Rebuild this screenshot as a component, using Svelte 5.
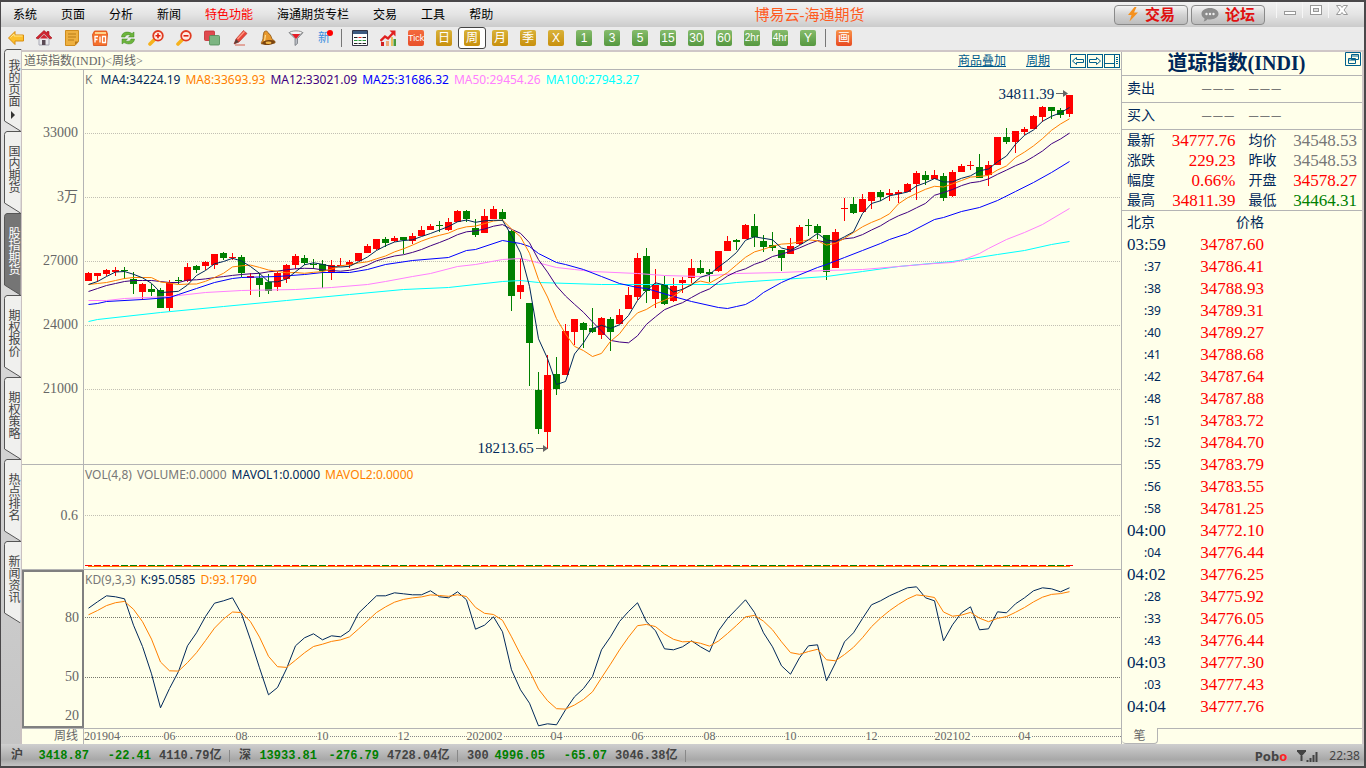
<script lang="ts">
  // Weekly chart workspace: menu, period toolbar, page tabs, K-line / volume / KD
  // panes, the quote panel with its tick list and the index ticker at the bottom.

  type Candle = [dir: string, top: number, bottom: number, high: number, low: number];

  const menu = ['系统', '页面', '分析', '新闻', '特色功能', '海通期货专栏', '交易', '工具', '帮助'];
  const tabs = ['我的页面', '国内期货', '股指期货', '期权报价', '期权策略', '热点排名', '新闻资讯'];
  const tools = ['back', 'home', 'note', 'f10', 'refresh', 'zoomin', 'zoomout', 'overlay', 'pen', 'bell', 'filter', 'new'];
  const periods = [
    ['日', 'gold'], ['周', 'gold'], ['月', 'gold'], ['季', 'gold'], ['X', 'gold'],
    ['1', 'green'], ['3', 'green'], ['5', 'green'], ['15', 'green'], ['30', 'green'], ['60', 'green'],
    ['2hr', 'green small'], ['4hr', 'green small'], ['Y', 'green'],
  ];
  let period = $state('周');
  let tab = $state('股指期货');

  const legend = [
    ['MA4:34224.19', 'navy'], ['MA8:33693.93', 'orange'], ['MA12:33021.09', 'purple'],
    ['MA25:31686.32', 'blue'], ['MA50:29454.26', 'pink'], ['MA100:27943.27', 'cyan'],
  ];

  // Levels are plot units counted downwards: 133 is 33000, every 64 units is 3000 points.
  const raw = `
    r 273 281 272 281|r 273 276 273 282|r 270 274 269 276|r 270 272 267 276|g 270 271 267 279
    g 279 284 272 294|r 284 292 283 300|g 289 292 284 296|g 290 308 288 308|r 282 308 280 311
    g 280 281 277 284|r 267 281 263 282|g 266 270 265 273|r 262 266 261 270|r 254 265 254 269
    g 253 258 252 260|r 257 258 253 260|g 257 273 255 277|r 276 278 273 295|g 278 285 273 297
    g 282 291 274 294|r 273 287 271 291|r 265 279 264 283|r 256 265 254 269|g 258 263 255 265
    g 264 265 259 269|g 264 271 260 288|r 265 272 260 280|r 265 266 258 266|r 262 265 260 268
    r 253 261 253 261|r 246 253 244 253|r 239 249 239 250|g 239 243 237 247|r 238 241 236 242
    g 237 240 237 254|r 236 241 233 244|r 230 236 226 236|r 226 230 224 230|g 225 226 221 232
    r 222 230 218 231|r 211 222 210 222|g 211 219 210 222|g 228 235 219 237|r 216 233 209 233
    r 209 219 206 219|g 212 219 209 221|g 231 296 230 311|r 285 292 258 299|g 303 343 303 386
    g 390 429 372 434|r 375 432 355 449|g 374 389 357 395|r 331 375 324 375|r 319 332 319 345
    g 323 330 322 348|g 328 332 308 333|r 318 335 317 339|g 319 332 317 351|r 315 324 309 324
    r 295 309 287 309|r 258 297 253 300|g 256 291 248 303|r 285 299 269 308|g 285 304 276 305
    r 286 301 278 302|r 280 283 277 293|r 268 278 259 283|g 268 273 260 274|g 272 274 269 282
    r 251 271 251 272|r 241 251 236 251|g 240 242 239 250|r 225 239 224 239|g 226 237 214 247
    g 241 247 235 252|g 245 248 232 251|g 250 258 250 271|r 246 254 238 254|r 227 244 225 245
    g 225 226 219 236|g 226 233 224 239|g 235 272 235 280|r 232 268 229 268|r 208 209 198 221
    g 204 213 197 214|r 199 212 194 212|r 192 201 192 209|g 192 197 190 201|r 193 195 189 201
    r 192 194 190 203|r 184 192 183 192|r 173 184 171 200|g 175 180 171 185|r 175 179 170 179
    g 176 198 173 201|r 172 196 170 197|r 166 172 164 172|r 165 166 161 170|g 167 178 154 178
    r 165 175 161 186|r 137 165 137 165|g 137 142 128 144|r 131 142 131 153|r 129 132 127 135
    r 116 129 115 129|r 107 117 106 122|g 107 111 107 119|g 110 115 108 118|r 95 114 95 117`;
  const candles = raw.trim().split(/\||\n/).map((s) => {
    const [dir, ...n] = s.trim().split(' ');
    return [dir, ...n.map(Number)] as Candle;
  });

  const step = 9;
  const cx = (i: number) => 4.5 + step * i;
  const closes = candles.map(([dir, top, bottom]) => (dir === 'r' ? top : bottom));

  // Moving average of n closes; head holds the values that need older candles.
  function average(n: number, head: number[]) {
    return closes.map((_, i) =>
      i < n - 1 ? head[i] : closes.slice(i - n + 1, i + 1).reduce((a, b) => a + b, 0) / n,
    );
  }
  const join = (ys: number[]) => ys.map((y, i) => `${cx(i)},${(y + 0.5).toFixed(1)}`).join(' ');
  const joinAt = (pts: number[][]) => pts.map(([i, y]) => `${cx(i)},${y + 0.5}`).join(' ');

  const lines = [
    ['cyan', joinAt([[0, 321], [1, 319], [8, 312], [15, 306], [22, 300], [29, 294], [35, 289], [40, 287], [46, 281], [48, 280], [50, 282], [57, 284], [70, 284], [72, 282], [77, 279], [82, 276], [86, 271], [90, 266], [96, 261], [101, 254], [104, 250], [107, 244], [109, 241]])],
    ['pink', joinAt([[0, 300], [2, 300], [4, 298], [9, 296], [13, 292], [17, 290], [23, 289], [27, 287], [31, 284], [33, 281], [36, 276], [38, 273], [41, 266], [43, 264], [46, 259], [48, 258], [49, 260], [52, 267], [54, 269], [56, 271], [61, 273], [64, 275], [68, 276], [72, 273], [77, 272], [82, 270], [86, 269], [90, 266], [94, 263], [96, 262], [97, 260], [99, 253], [100, 248], [102, 239], [104, 232], [106, 224], [109, 208]])],
    ['blue', joinAt([[0, 304], [1, 303], [2, 301], [6, 299], [9, 297], [10, 294], [12, 288], [14, 282], [16, 278], [17, 277], [21, 276], [24, 274], [26, 272], [29, 272], [31, 269], [33, 264], [36, 260], [40, 257], [42, 250], [43, 249], [46, 240], [48, 243], [49, 246], [50, 253], [52, 262], [53, 264], [55, 269], [57, 276], [59, 283], [61, 287], [62, 288], [65, 296], [67, 301], [70, 307], [71, 308], [72, 306], [73, 304], [74, 299], [75, 292], [77, 282], [78, 278], [81, 267], [82, 264], [84, 257], [86, 250], [88, 243], [89, 239], [91, 233], [94, 219], [95, 217], [97, 211], [99, 207], [101, 200], [103, 191], [105, 182], [107, 172], [109, 161]])],
    ['purple', join(average(12, [291, 288, 285, 283, 281, 280, 280, 280, 281, 282, 282]))],
    ['orange', join(average(8, [284, 283, 282, 280, 278, 277, 277]))],
    ['navy', join(average(4, [284, 281, 276]))],
  ];

  // K in thirds of a unit; D is the usual 2/3 + 1/3 smoothing of K.
  const k = [
    143, 124, 106, 109, 115, 194, 258, 340, 442, 384, 333, 256, 217, 168, 128, 121, 112, 160, 238, 322,
    403, 381, 325, 256, 232, 220, 238, 226, 229, 211, 158, 132, 106, 106, 97, 100, 103, 103, 91, 109,
    112, 94, 118, 206, 194, 169, 214, 328, 388, 428, 496, 490, 493, 448, 409, 384, 348, 268, 229, 183,
    153, 127, 184, 211, 265, 268, 259, 241, 259, 274, 211, 174, 146, 118, 156, 217, 259, 316, 341, 292,
    256, 253, 361, 307, 244, 217, 174, 133, 121, 106, 94, 82, 79, 112, 121, 241, 193, 157, 139, 208,
    205, 154, 157, 130, 112, 91, 82, 85, 94, 82,
  ];
  const d = [163];
  for (let i = 1; i < k.length; i++) d.push((d[i - 1] * 2 + k[i]) / 3);
  const kLine = join(k.map((v) => 560 + v / 3));
  const dLine = join(d.map((v) => 560 + v / 3));

  const months: [string, number][] = [
    ['06', 9], ['08', 17], ['10', 26], ['12', 35], ['202002', 44], ['04', 52],
    ['06', 61], ['08', 69], ['10', 78], ['12', 87], ['202102', 96], ['04', 104],
  ];

  const quotes = [
    ['最新', '34777.76', 'up', '均价', '34548.53', 'flat'],
    ['涨跌', '229.23', 'up', '昨收', '34548.53', 'flat'],
    ['幅度', '0.66%', 'up', '开盘', '34578.27', 'up'],
    ['最高', '34811.39', 'up', '最低', '34464.31', 'down'],
  ];
  const ticks = [
    ['03:59', '34787.60'], [':37', '34786.41'], [':38', '34788.93'], [':39', '34789.31'], [':40', '34789.27'],
    [':41', '34788.68'], [':42', '34787.64'], [':48', '34787.88'], [':51', '34783.72'], [':52', '34784.70'],
    [':55', '34783.79'], [':56', '34783.55'], [':58', '34781.25'], ['04:00', '34772.10'], [':04', '34776.44'],
    ['04:02', '34776.25'], [':28', '34775.92'], [':33', '34776.05'], [':43', '34776.44'], ['04:03', '34777.30'],
    [':03', '34777.43'], ['04:04', '34777.76'],
  ];
  const indices = [
    ['沪', '3418.87', '-22.41', '4110.79亿'],
    ['深', '13933.81', '-276.79', '4728.04亿'],
    ['300', '4996.05', '-65.07', '3046.38亿'],
  ];
</script>

<div class="window">
  <header>
    <nav class="menu">
      {#each menu as m}
        <button type="button" class:hot={m === '特色功能'}>{m}</button>
      {/each}
    </nav>
    <h1>博易云-海通期货</h1>
    <button type="button" class="pill">
      <svg width="12" height="15" viewBox="0 0 12 15"><path d="M7.500 0 1 8h3.500L2.500 14.500 11 5.500H7L9.500 0z" fill="#f5911e" /></svg>
      交易
    </button>
    <button type="button" class="pill">
      <svg width="18" height="15" viewBox="0 0 18 15"><path d="M9 1c4.800 0 8.500 2.500 8.500 5.800S13.800 12.500 9 12.500c-.9 0-1.800-.1-2.600-.3C5.500 13.500 4 14.300 2.500 14.500c.7-.9 1.100-2 1-3C1.700 10.400.5 8.700.5 6.800.5 3.500 4.200 1 9 1z" fill="#8c8c8c" /><circle cx="5.500" cy="7" r="1.200" fill="#eee" /><circle cx="9" cy="7" r="1.200" fill="#eee" /><circle cx="12.500" cy="7" r="1.200" fill="#eee" /></svg>
      论坛
    </button>
    <div class="winctl">
      <button type="button" aria-label="最小化"><svg width="14" height="14"><rect x="1.500" y="8.500" width="11" height="3" fill="#fff" stroke="#999" /></svg></button>
      <button type="button" aria-label="最大化"><svg width="14" height="14"><rect x="1.500" y="2.500" width="11" height="9" fill="#fff" stroke="#999" /><rect x="4.500" y="5.500" width="5" height="3" fill="#ddd" stroke="#999" /></svg></button>
      <button type="button" aria-label="关闭"><svg width="14" height="14"><path d="M1.500 2.500h4L7 4.500l1.500-2h4L9 7l3.500 4.500h-4L7 9.500l-1.500 2h-4L5 7z" fill="#fff" stroke="#999" /></svg></button>
    </div>
  </header>

  <div class="toolbar">
    {#each tools as t}
      <button type="button" aria-label={t === 'new' ? undefined : t}>
        {#if t === 'new'}
          <span class="new">新</span>
        {:else}
          <svg width="16" height="16" viewBox="0 0 16 16">
            {#if t === 'back'}
              <path d="M.5 8 7 1.500V5h8.500v6H7v3.500z" fill="#fcc02c" stroke="#d98e10" />
              <path d="M2.500 7.500 6 4v2h8.500" fill="none" stroke="#ffe58a" />
            {:else if t === 'home'}
              <path d="M3 7h10v8H3z" fill="#e8e8ec" stroke="#a8a8b4" />
              <path d="M8 .5 0 8l2 1 6-5.500L14 9l2-1-3-3V1.500h-2V3z" fill="#d32430" stroke="#9c1018" stroke-width=".6" />
              <path d="M8 4.500 4 8.500h8z" fill="#d32430" />
              <path d="M6 10h3.500v5H6z" fill="#5a4a54" />
            {:else if t === 'note'}
              <path d="M1.500.5h13v11l-3.500 4h-9.500z" fill="#eeb040" stroke="#cf8c1c" />
              <path d="M4 4h8M4 7h8M4 10h6" stroke="#b87c18" />
              <path d="M11 15v-3.500h3.500z" fill="#b87818" />
            {:else if t === 'f10'}
              <path d="M.5 4.500 2.500 1h12l1 3-1 11.500h-13z" fill="#f5702a" stroke="#d94a12" stroke-width=".8" />
              <path d="M3 3h11" stroke="#ffd28a" stroke-width="2" />
              <path d="M3 12.500v-6h3M3 9.500h2.500M8 6.500v6M10.500 6.500h3v6h-3z" fill="none" stroke="#fff" stroke-width="1.300" />
            {:else if t === 'refresh'}
              <path d="M1.500 7C2 1.500 8 1 12 3.500l2-1.500v5H8.500L10.500 5.200C7.500 4 5.500 5 5 7z" fill="#6db53c" stroke="#3b8420" stroke-width=".5" />
              <path d="M14.500 9C14 14.500 8 15 4 12.500L2 14V9h5.500l-2 1.800C8.500 12 10.500 11 11 9z" fill="#6db53c" stroke="#3b8420" stroke-width=".5" />
            {:else if t === 'zoomin' || t === 'zoomout'}
              <path d="M6.500 9.500 2 14" stroke="#f6b21c" stroke-width="3.600" stroke-linecap="round" />
              <circle cx="10" cy="5.800" r="4.800" fill="#ffece4" stroke="#e03a20" stroke-width="1.800" />
              <path d={t === 'zoomin' ? 'M7.500 5.800h5M10 3.300v5' : 'M7.500 5.800h5'} stroke="#e02010" stroke-width="1.600" />
            {:else if t === 'overlay'}
              <rect x=".5" y="1" width="10" height="9.500" rx="1" fill="#df4a4e" stroke="#c12e34" stroke-width=".8" />
              <rect x="5.500" y="5.500" width="10" height="9.500" rx="1" fill="#7cb582" stroke="#4c8c56" stroke-width=".8" />
            {:else if t === 'pen'}
              <path d="M2 14 4 9l7.500-8.500 3.500 3L7 12z" fill="#e8463a" stroke="#b42a20" stroke-width=".6" />
              <path d="M5.500 9 12.500 1.500" stroke="#ff9c84" stroke-width="1.200" />
              <path d="M2 14 4 9l3 3z" fill="#5a4038" />
              <path d="M3 15h10" stroke="#d8604c" />
            {:else if t === 'bell'}
              <path d="M4 2c2-2 4-.5 4 1 3.500 1.500 3 5 4.500 6.500 1.500 1 3 1.500 2.500 3.500L1.500 14C.5 12 3 11 3 8.500 3 6 3.500 4 4 2z" fill="#e8982c" stroke="#8c5410" stroke-width=".8" />
              <path d="M5.500 5c-.5 2-.5 4-1 6" stroke="#ffdf94" stroke-width="1.200" fill="none" />
              <ellipse cx="8.500" cy="12.500" rx="6.500" ry="2.400" transform="rotate(-6 8.500 12.500)" fill="#7a4410" />
              <ellipse cx="8.500" cy="12.800" rx="3" ry="1.300" fill="#f2b848" />
            {:else if t === 'filter'}
              <path d="M1 2.500h14L9.500 8.500v5L7 15.500v-7z" fill="#b9bcc4" stroke="#74787f" stroke-width=".8" />
              <ellipse cx="8" cy="2.800" rx="6.500" ry="1.900" fill="#f4f4f4" stroke="#777" stroke-width=".8" />
              <path d="M4 4h8L8.500 8.500h-1z" fill="#e81e28" />
            {/if}
          </svg>
        {/if}
      </button>
    {/each}
    <i class="sep"></i>
    <button type="button" aria-label="报价">
      <svg width="16" height="16" viewBox="0 0 16 16">
        <path d="M.5.500h15v15H.5z" fill="#fff" stroke="#334" />
        <path d="M1 1h14v3H1z" fill="#3d5a80" />
        <path d="M2 7.500h3.500M10.500 7.500H14" stroke="#222" />
        <path d="M6.500 7.500h3" stroke="#e22" />
        <path d="M2 10.500h3.500M6.500 10.500h3M10.500 10.500H14" stroke="#2a9a3a" />
        <path d="M2 13.500h3.500M6.500 13.500h3M10.500 13.500H14" stroke="#222" />
      </svg>
    </button>
    <button type="button" aria-label="走势">
      <svg width="16" height="16" viewBox="0 0 16 16">
        <path d="M1 12h3v4H1z" fill="#d02020" /><path d="M6 11h3v5H6z" fill="#f0a878" />
        <path d="M11 7h2v9h-2z" fill="#e8c060" /><path d="M13.500 9H16v7h-2.500z" fill="#4a9a3c" />
        <path d="M.5 11 5 6.500l3 2L14 2" fill="none" stroke="#e02020" stroke-width="2.400" />
        <path d="M9.500.500H15.500v6z" fill="#e02020" />
      </svg>
    </button>
    <button type="button"><span class="chip tick">Tick</span></button>
    {#each periods as [p, tone]}
      <button type="button" class:selected={p === period} onclick={() => (period = p)}>
        <span class="chip {tone}">{p}</span>
      </button>
    {/each}
    <i class="sep"></i>
    <button type="button"><span class="chip red">画</span></button>
  </div>

  <main>
    <nav class="tabs">
      {#each tabs as name, i}
        <button type="button" class:current={name === tab} class:first={i === 0} onclick={() => (tab = name)}>
          <svg width="17" height="82" viewBox="0 0 17 82">
            <path d="M17 .5H3Q.5 1 .5 3.500V72L16.500 82" />
          </svg>
          <span>{name}</span>
          {#if i === 0}<svg class="caret" width="6" height="8" viewBox="0 0 6 8"><path d="M1 0 5 4 1 8z" /></svg>{/if}
        </button>
      {/each}
    </nav>

    <section class="chart">
      <div class="caption">
        <h2>道琼指数(INDI)&lt;周线&gt;</h2>
        <a href="#overlay">商品叠加</a>
        <a href="#period">周期</a>
        <div class="pager">
          <button type="button" aria-label="前移"><svg width="16" height="14"><rect x=".5" y=".5" width="15" height="13" /><path d="M2.500 7 6.500 3.500v2h7v3h-7v2z" /></svg></button>
          <button type="button" aria-label="后移"><svg width="16" height="14"><rect x=".5" y=".5" width="15" height="13" /><path d="M13.500 7 9.500 3.500v2h-7v3h7v2z" /></svg></button>
          <button type="button" aria-label="布局"><svg width="16" height="14"><rect x=".5" y=".5" width="15" height="13" /><path d="M10.500.500v13M.5 9.500h10M12 3.500h2M12 5.500h2M12 7.500h2M12 9.500h2" /></svg></button>
        </div>
      </div>

      <div class="pane price">
        <div class="axis">
          <span>33000</span><span>3万</span><span>27000</span><span>24000</span><span>21000</span>
        </div>
        <div class="plot">
          <svg viewBox="0 70 1037 394" preserveAspectRatio="none">
            {#each [133, 197, 261, 325, 389] as y}
              <line class="grid" x1="1" x2="1037" y1={y + 0.5} y2={y + 0.5} />
            {/each}
            {#each candles as [dir, top, bottom, high, low], i}
              <g class={dir === 'r' ? 'rise' : 'fall'}>
                <rect x={cx(i) - 0.5} y={high} width="1" height={low - high} />
                <rect x={cx(i) - 3.5} y={top} width="7" height={bottom - top} />
              </g>
            {/each}
            {#each lines as [tone, points]}
              <polyline class={tone} {points} />
            {/each}
          </svg>
          <div class="legend">
            <span class="gray">K&nbsp;</span>
            {#each legend as [text, tone]}<span class={tone}>{text}</span>{/each}
          </div>
          <div class="mark high">34811.39<svg width="13" height="7"><path d="M0 3.500h8" /><path class="head" d="M7 0l5 3.500L7 7z" /></svg></div>
          <div class="mark low">18213.65<svg width="13" height="7"><path d="M0 3.500h8" /><path class="head" d="M7 0l5 3.500L7 7z" /></svg></div>
        </div>
      </div>

      <div class="pane volume">
        <div class="axis"><span>0.6</span></div>
        <div class="plot">
          <svg viewBox="0 465 1037 104" preserveAspectRatio="none">
            <line class="grid" x1="1" x2="1037" y1="515.5" y2="515.5" />
            {#each candles as [dir], i}
              <rect class={dir === 'r' ? 'rise' : 'fall'} x={cx(i) - 3.5} y="565" width="7" height="1" />
            {/each}
            <line class="orange" x1="4" x2="986" y1="566.5" y2="566.5" />
          </svg>
          <div class="legend">
            <span class="gray">VOL(4,8)</span><span class="gray">VOLUME:0.0000</span>
            <span class="navy">MAVOL1:0.0000</span><span class="orange">MAVOL2:0.0000</span>
          </div>
        </div>
      </div>

      <div class="pane kd">
        <div class="axis boxed"><span>80</span><span>50</span><span>20</span></div>
        <div class="plot">
          <svg viewBox="0 570 1037 158" preserveAspectRatio="none">
            <line class="grid dark" x1="1" x2="1037" y1="617.5" y2="617.5" />
            <line class="grid dark" x1="1" x2="1037" y1="677.5" y2="677.5" />
            <polyline class="navy" points={kLine} />
            <polyline class="orange" points={dLine} />
          </svg>
          <div class="legend">
            <span class="gray">KD(9,3,3)</span><span class="navy">K:95.0585</span><span class="orange">D:93.1790</span>
          </div>
        </div>
      </div>

      <div class="timeline">
        <span class="unit">周线</span>
        <div class="scale">
          <span class="start">201904</span>
          {#each months as [label, i]}
            <span class="month" style="left:{(cx(i) / 1037) * 100}%">{label}</span>
          {/each}
        </div>
      </div>
    </section>

    <aside>
      <div class="name">
        <h2>道琼指数(INDI)</h2>
        <button type="button" aria-label="弹出"><svg width="16" height="14"><path d="M.5.500h15v13H.5zM6.500 2.500h7v5h-7zM6.500 4h7M3.500 6.500h7v5h-7zM3.500 8h7" /></svg></button>
      </div>
      <div class="side"><span>卖出</span><b>−−−</b><b>−−−</b></div>
      <div class="side"><span>买入</span><b>−−−</b><b>−−−</b></div>
      <table class="quotes">
        <tbody>
          {#each quotes as [la, va, ta, lb, vb, tb]}
            <tr><th>{la}</th><td class={ta}>{va}</td><th>{lb}</th><td class={tb}>{vb}</td></tr>
          {/each}
        </tbody>
      </table>
      <table class="ticks">
        <thead><tr><th>北京</th><th class="num">价格</th></tr></thead>
        <tbody>
          {#each ticks as [time, price]}
            <tr><td class:sec={time[0] === ':'}>{time}</td><td class="num up">{price}</td></tr>
          {/each}
        </tbody>
      </table>
      <div class="foot"><button type="button">笔</button><i></i></div>
    </aside>
  </main>

  <footer>
    {#each indices as [name, last, change, amount]}
      <div class="index">
        <span class="pair"><span>{name}</span><span class="down">{last}</span></span>
        <span class="change down">{change}</span>
        <span class="amount">{amount}</span>
      </div>
    {/each}
    <div class="state">
      <strong>Pob<em>o</em></strong>
      <svg width="22" height="13" viewBox="0 0 22 13"><path d="M0 1h9M1 1l3.500 4L8 1M4.500 1v10M10.500 12v-2M13.500 12V8M16.500 12V5M19.500 12V2" /></svg>
      <time>22:38</time>
    </div>
  </footer>
</div>

<style>
  :global(body) { margin: 0; background: #4a484a; }

  .window {
    --paper: #ffffea;
    --rule: #b4b4b4;
    --navy: #00285a;
    box-sizing: border-box;
    display: flex;
    flex-direction: column;
    min-height: 100vh;
    border: solid #4a484a;
    border-width: 2px 2px 2px 1px;
    background: #ebebeb;
    color: #000;
    font: 12px/16px "Liberation Serif", "Noto Sans CJK SC", serif;
  }
  button {
    padding: 0;
    border: 0;
    background: none;
    color: inherit;
    font: inherit;
    cursor: pointer;
  }
  h1, h2 { margin: 0; font-weight: 400; }
  svg { display: block; flex: none; }

  header {
    display: flex;
    align-items: center;
    height: 25px;
    background: linear-gradient(#f2f2f2, #e4e4e4 50%, #cbcbcb);
  }
  .menu { display: flex; }
  .menu button { padding: 0 12px; }
  .menu .hot { color: #f00; }
  h1 { flex: 1; text-align: center; color: #ff5a1e; font-size: 15px; }
  .pill {
    display: flex;
    align-items: center;
    justify-content: center;
    gap: 6px;
    box-sizing: border-box;
    width: 74px;
    height: 20px;
    margin-right: 3px;
    border: 1px solid #8a8a8a;
    border-radius: 4px;
    background: linear-gradient(#f4f4f4, #d2d2d2 50%, #bdbdbd);
    color: #e01010;
    font-size: 15px;
    font-weight: 700;
  }
  .winctl { display: flex; align-self: flex-start; padding: 0 10px 0 8px; }
  .winctl button { display: grid; place-items: center; width: 26px; height: 16px; border-left: 1px solid #f6f6f6; }

  .toolbar { display: flex; align-items: center; height: 22px; padding: 0 0 1px 1px; }
  .toolbar button {
    display: grid;
    place-items: center;
    box-sizing: border-box;
    width: 28px;
    height: 22px;
    border: 1px solid transparent;
    border-radius: 3px;
  }
  .toolbar .selected { border-color: #444; background: #fff; }
  .sep { width: 1px; height: 18px; margin: 0 4px 0 3px; background: #777; }
  .new { position: relative; color: #3d8fe0; }
  .new::after {
    content: "";
    position: absolute;
    top: 0;
    right: -3px;
    width: 6px;
    height: 6px;
    border-radius: 50%;
    background: #f00;
  }
  .chip {
    width: 16px;
    height: 16px;
    border-radius: 2px;
    color: #fff;
    font: 12px/16px "Liberation Sans", "Noto Sans CJK SC", sans-serif;
    text-align: center;
  }
  .chip.gold { background: linear-gradient(#d9b23a, #c8900c); }
  .chip.green { background: linear-gradient(#86bc6c, #55983f); }
  .chip.red { background: linear-gradient(#f8944a, #e84a20); }
  .chip.tick { background: linear-gradient(#f46a3c, #e8502a); font-size: 9px; }
  .chip.small { font-size: 10px; }

  main {
    display: flex;
    flex: 1;
    border-top: 2px solid #cfc7c7;
    border-right: 2px solid #cfc7c7;
    background: var(--paper);
  }
  .tabs {
    display: flex;
    flex-direction: column;
    width: 16px;
    padding-left: 3px;
    margin-top: -3px;
    border-right: 2px solid #c9c1c1;
    background: linear-gradient(#e6e6e6, #c4c4c4);
  }
  .tabs button {
    position: relative;
    display: flex;
    align-items: flex-end;
    box-sizing: border-box;
    width: 17px;
    height: 82px;
    padding: 14px 0 0 2px;
    color: #444;
    line-height: 13px;
    text-align: left;
    writing-mode: vertical-rl;
  }
  .tabs .first { padding-top: 10px; }
  .tabs svg { position: absolute; top: 0; left: 0; fill: #f0f0ee; stroke: #555; }
  .tabs .caret { top: 62px; left: 6px; fill: #333; stroke: none; }
  .tabs .current svg { fill: #757575; }
  .tabs span { position: relative; }
  .tabs .current { color: #fff; }

  .chart { display: flex; flex: 1; flex-direction: column; min-width: 0; }
  .caption {
    display: flex;
    align-items: center;
    height: 17px;
    border-bottom: 1px solid var(--rule);
    color: #666;
  }
  .caption h2 { flex: 1; padding-left: 2px; font-size: 12px; }
  .caption a { margin-right: 20px; color: #005a8c; text-decoration: underline; }
  .pager { display: flex; gap: 1px; padding-right: 1px; }
  .pager svg, .name svg { fill: none; stroke: #00608c; }

  .pane { display: flex; min-height: 0; border-bottom: 1px solid var(--rule); }
  .price { flex: 394 1 0; }
  .volume { flex: 104 1 0; }
  .kd { flex: 158 1 0; }
  .axis {
    display: grid;
    align-items: center;
    box-sizing: border-box;
    width: 62px;
    padding-right: 5px;
    border-right: 1px solid var(--rule);
    color: #666;
    font-size: 14px;
    text-align: right;
  }
  .price .axis { grid-template-rows: repeat(5, 64fr); padding-top: 31px; padding-bottom: 43px; }
  .volume .axis { padding-bottom: 2px; }
  .kd .axis { grid-template-rows: 60fr 60fr 20fr; padding: 17px 3px 0 0; border: 2px solid #808080; }
  .plot { position: relative; flex: 1; min-width: 0; }
  .plot > svg { position: absolute; width: 100%; height: 100%; }
  .plot polyline, .plot line { fill: none; stroke: currentColor; vector-effect: non-scaling-stroke; }
  .grid { color: #c2c0b4; stroke-dasharray: 1 1; }
  .grid.dark { color: #77776c; }
  .rise { fill: #f00; }
  .fall { fill: #008000; }

  .legend {
    position: relative;
    display: flex;
    gap: 5px;
    padding: 2px 0 0 1px;
    font-family: "Noto Sans", sans-serif;
    white-space: nowrap;
  }
  .gray { color: #777; }
  .navy { color: var(--navy); }
  .orange { color: #ff8000; }
  .purple { color: #400080; }
  .blue { color: #00f; }
  .pink { color: #ff80ff; }
  .cyan { color: #0ff; }

  .mark {
    position: absolute;
    display: flex;
    align-items: center;
    gap: 2px;
    color: var(--navy);
    font-size: 15px;
  }
  .mark.high { right: 5%; top: 4%; }
  .mark.low { right: 55%; top: 94%; padding-right: 2px; }
  .mark svg { stroke: #666; }
  .mark .head { fill: #666; stroke: none; }

  .timeline { display: flex; height: 15px; color: #666; line-height: 15px; }
  .unit { box-sizing: border-box; width: 62px; padding-right: 5px; border-right: 1px solid var(--rule); text-align: right; }
  .scale {
    position: relative;
    flex: 1;
    background: repeating-linear-gradient(90deg, #888 0 1px, transparent 1px 2px) 0 7px / 100% 1px no-repeat;
  }
  .scale span { background: var(--paper); }
  .start { float: left; }
  .month { position: absolute; transform: translateX(-50%); }

  aside {
    display: flex;
    flex-direction: column;
    width: 240px;
    border-left: 1px solid var(--rule);
    color: var(--navy);
    font-size: 14px;
  }
  .name { display: flex; height: 23px; border-bottom: 1px solid var(--rule); }
  .name h2 { flex: 1; padding-left: 6px; font-size: 20px; font-weight: 700; line-height: 22px; text-align: center; }
  .name button { align-self: flex-start; padding-right: 1px; }
  .side {
    display: flex;
    align-items: center;
    height: 26px;
    padding-left: 5px;
    border-bottom: 1px solid var(--rule);
  }
  .side span { width: 74px; }
  .side b { width: 47px; color: #777; font-size: 20px; font-weight: 400; }
  table { border-collapse: collapse; }
  th { padding: 2px 0 0 5px; font-weight: 400; text-align: left; }
  td { padding: 2px 0 0; font-size: 17px; line-height: 18px; }
  .quotes { width: 100%; border-bottom: 1px solid var(--rule); }
  .quotes tr { height: 20px; }
  .quotes td { width: 80px; text-align: right; }
  .quotes td + th { padding-left: 13px; }
  .quotes td:last-child { padding-right: 5px; }
  .up { color: #f00; }
  .down { color: #008000; }
  .flat { color: #777; }
  .ticks { width: 142px; }
  .ticks tr { height: 22px; }
  .ticks td:first-child { padding-left: 5px; }
  .ticks td.sec { padding-left: 22px; font: 12px/18px "Noto Sans", sans-serif; }
  .ticks .num { text-align: right; }
  .foot { display: flex; height: 16px; margin-top: auto; color: #666; font-size: 12px; }
  .foot button { width: 36px; border: solid var(--rule); border-width: 0 1px 1px 0; border-radius: 0 0 4px 4px; line-height: 14px; }
  .foot i { flex: 1; border-top: 1px solid var(--rule); }

  footer {
    display: flex;
    align-items: center;
    height: 20px;
    padding: 2px 4px 0 10px;
    background: linear-gradient(#cfcfcf, #a8a8a8 70%, #c4c4c4);
    color: #444;
    font: 700 12px/16px "Liberation Mono", "Noto Sans CJK SC", monospace;
    white-space: nowrap;
  }
  .index { display: flex; align-items: center; }
  .pair { display: flex; justify-content: space-between; width: 78px; }
  .change { width: 62px; text-align: right; }
  .amount {
    width: 70px;
    padding-left: 8px;
    margin-right: 9px;
    border-right: 1px solid #888;
    line-height: 12px;
  }
  .state { display: flex; align-items: center; gap: 10px; margin-left: auto; font: 12px/16px "Noto Sans", sans-serif; }
  .state strong { font-size: 13px; }
  .state em { color: #f22; font-style: normal; }
  .state svg { fill: none; stroke: #444; stroke-width: 2; }
</style>
